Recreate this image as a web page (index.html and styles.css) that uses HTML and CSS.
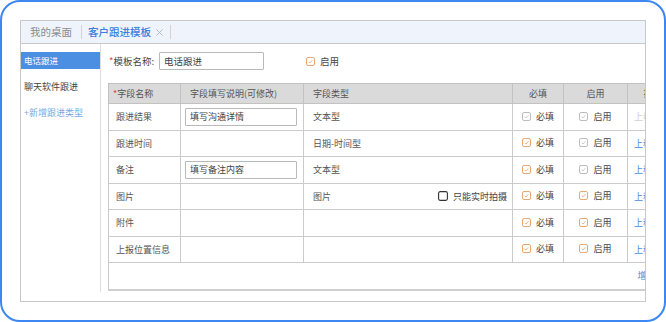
FILE: index.html
```html
<!DOCTYPE html>
<html>
<head>
<meta charset="utf-8">
<title>客户跟进模板</title>
<link rel="stylesheet" href="styles.css">
</head>
<body>
<div class="frame">
  <div class="window">
    <div class="tabbar">
      <span class="tab">我的桌面</span>
      <span class="sep"></span>
      <span class="tab active">客户跟进模板<svg class="close" width="7" height="7" viewBox="0 0 7 7"><path d="M0.5 0.5 L6.5 6.5 M6.5 0.5 L0.5 6.5" stroke="#b4b4b4" stroke-width="0.9" fill="none"/></svg></span>
      <span class="sep sep-last"></span>
    </div>
    <div class="body">
      <aside class="sidebar">
        <div class="side-item selected">电话跟进</div>
        <div class="side-item">聊天软件跟进</div>
        <div class="side-item add">+新增跟进类型</div>
      </aside>
      <main class="main">
        <div class="form-row">
          <span class="form-label"><span class="req">*</span>模板名称:</span>
          <span class="input name-input">电话跟进</span>
          <span class="check-label enable-top"><svg class="cb orange" width="9" height="9" viewBox="0 0 9 9"><rect x="0.5" y="0.5" width="8" height="8" rx="1.5" fill="#fff" stroke="currentColor"/><path d="M2.7 4.8 L4 6 L6.3 3.3" fill="none" stroke="currentColor" stroke-width="0.8"/></svg>启用</span>
        </div>
        <div class="table-wrap">
          <table class="fields">
            <colgroup>
              <col class="c1"><col class="c2"><col class="c3"><col class="c4"><col class="c5"><col class="c6">
            </colgroup>
            <thead>
              <tr>
                <th class="first"><span class="req">*</span>字段名称</th>
                <th>字段填写说明(可修改)</th>
                <th>字段类型</th>
                <th class="center">必填</th>
                <th class="center">启用</th>
                <th class="center">操作</th>
              </tr>
            </thead>
            <tbody>
              <tr>
                <td class="first">跟进结果</td>
                <td class="incell"><span class="input cell-input">填写沟通详情</span></td>
                <td>文本型</td>
                <td class="center"><span class="check-label"><svg class="cb grey" width="9" height="9" viewBox="0 0 9 9"><rect x="0.5" y="0.5" width="8" height="8" rx="1.5" fill="#fff" stroke="currentColor"/><path d="M2.7 4.8 L4 6 L6.3 3.3" fill="none" stroke="currentColor" stroke-width="0.8"/></svg>必填</span></td>
                <td class="center"><span class="check-label"><svg class="cb grey" width="9" height="9" viewBox="0 0 9 9"><rect x="0.5" y="0.5" width="8" height="8" rx="1.5" fill="#fff" stroke="currentColor"/><path d="M2.7 4.8 L4 6 L6.3 3.3" fill="none" stroke="currentColor" stroke-width="0.8"/></svg>启用</span></td>
                <td class="op disabled">上移</td>
              </tr>
              <tr>
                <td class="first">跟进时间</td>
                <td></td>
                <td>日期-时间型</td>
                <td class="center"><span class="check-label"><svg class="cb orange" width="9" height="9" viewBox="0 0 9 9"><rect x="0.5" y="0.5" width="8" height="8" rx="1.5" fill="#fff" stroke="currentColor"/><path d="M2.7 4.8 L4 6 L6.3 3.3" fill="none" stroke="currentColor" stroke-width="0.8"/></svg>必填</span></td>
                <td class="center"><span class="check-label"><svg class="cb grey" width="9" height="9" viewBox="0 0 9 9"><rect x="0.5" y="0.5" width="8" height="8" rx="1.5" fill="#fff" stroke="currentColor"/><path d="M2.7 4.8 L4 6 L6.3 3.3" fill="none" stroke="currentColor" stroke-width="0.8"/></svg>启用</span></td>
                <td class="op">上移</td>
              </tr>
              <tr>
                <td class="first">备注</td>
                <td class="incell"><span class="input cell-input">填写备注内容</span></td>
                <td>文本型</td>
                <td class="center"><span class="check-label"><svg class="cb orange" width="9" height="9" viewBox="0 0 9 9"><rect x="0.5" y="0.5" width="8" height="8" rx="1.5" fill="#fff" stroke="currentColor"/><path d="M2.7 4.8 L4 6 L6.3 3.3" fill="none" stroke="currentColor" stroke-width="0.8"/></svg>必填</span></td>
                <td class="center"><span class="check-label"><svg class="cb grey" width="9" height="9" viewBox="0 0 9 9"><rect x="0.5" y="0.5" width="8" height="8" rx="1.5" fill="#fff" stroke="currentColor"/><path d="M2.7 4.8 L4 6 L6.3 3.3" fill="none" stroke="currentColor" stroke-width="0.8"/></svg>启用</span></td>
                <td class="op">上移</td>
              </tr>
              <tr>
                <td class="first">图片</td>
                <td></td>
                <td><div class="type-split"><span>图片</span><span class="check-label"><svg class="cb dark" width="10" height="10" viewBox="0 0 10 10"><rect x="0.6" y="0.6" width="8.8" height="8.8" rx="1.6" fill="#fff" stroke="currentColor" stroke-width="1.1"/></svg>只能实时拍摄</span></div></td>
                <td class="center"><span class="check-label"><svg class="cb orange" width="9" height="9" viewBox="0 0 9 9"><rect x="0.5" y="0.5" width="8" height="8" rx="1.5" fill="#fff" stroke="currentColor"/><path d="M2.7 4.8 L4 6 L6.3 3.3" fill="none" stroke="currentColor" stroke-width="0.8"/></svg>必填</span></td>
                <td class="center"><span class="check-label"><svg class="cb orange" width="9" height="9" viewBox="0 0 9 9"><rect x="0.5" y="0.5" width="8" height="8" rx="1.5" fill="#fff" stroke="currentColor"/><path d="M2.7 4.8 L4 6 L6.3 3.3" fill="none" stroke="currentColor" stroke-width="0.8"/></svg>启用</span></td>
                <td class="op">上移</td>
              </tr>
              <tr>
                <td class="first">附件</td>
                <td></td>
                <td></td>
                <td class="center"><span class="check-label"><svg class="cb orange" width="9" height="9" viewBox="0 0 9 9"><rect x="0.5" y="0.5" width="8" height="8" rx="1.5" fill="#fff" stroke="currentColor"/><path d="M2.7 4.8 L4 6 L6.3 3.3" fill="none" stroke="currentColor" stroke-width="0.8"/></svg>必填</span></td>
                <td class="center"><span class="check-label"><svg class="cb orange" width="9" height="9" viewBox="0 0 9 9"><rect x="0.5" y="0.5" width="8" height="8" rx="1.5" fill="#fff" stroke="currentColor"/><path d="M2.7 4.8 L4 6 L6.3 3.3" fill="none" stroke="currentColor" stroke-width="0.8"/></svg>启用</span></td>
                <td class="op">上移</td>
              </tr>
              <tr>
                <td class="first">上报位置信息</td>
                <td></td>
                <td></td>
                <td class="center"><span class="check-label"><svg class="cb orange" width="9" height="9" viewBox="0 0 9 9"><rect x="0.5" y="0.5" width="8" height="8" rx="1.5" fill="#fff" stroke="currentColor"/><path d="M2.7 4.8 L4 6 L6.3 3.3" fill="none" stroke="currentColor" stroke-width="0.8"/></svg>必填</span></td>
                <td class="center"><span class="check-label"><svg class="cb orange" width="9" height="9" viewBox="0 0 9 9"><rect x="0.5" y="0.5" width="8" height="8" rx="1.5" fill="#fff" stroke="currentColor"/><path d="M2.7 4.8 L4 6 L6.3 3.3" fill="none" stroke="currentColor" stroke-width="0.8"/></svg>启用</span></td>
                <td class="op">上移</td>
              </tr>
            </tbody>
            <tfoot>
              <tr class="foot">
                <td colspan="5" class="foot-empty"></td>
                <td class="op foot-add">增加</td>
              </tr>
            </tfoot>
          </table>
        </div>
      </main>
    </div>
  </div>
</div>
</body>
</html>
```
FILE: styles.css
```css
html, body {
  margin: 0;
  padding: 0;
  background: #ffffff;
}

body {
  font-family: "Noto Sans CJK SC", "Noto Sans", sans-serif;
}

.frame {
  width: 666px;
  height: 322px;
  box-sizing: border-box;
  border: 2px solid #3d87f2;
  border-radius: 20px;
  padding: 18px 0 0 18px;
}

.window {
  width: 626px;
  height: 282px;
  box-sizing: border-box;
  border: 1px solid #c8c8c8;
  display: flex;
  flex-direction: column;
  overflow: hidden;
}

/* tab bar */
.tabbar {
  height: 23px;
  box-sizing: border-box;
  flex-shrink: 0;
  background: #eff3fb;
  border-bottom: 1px solid #c9c9c9;
  display: flex;
  align-items: center;
  padding-left: 9px;
  font-size: 10.5px;
}

.tab {
  color: #8c8c8c;
  line-height: 1;
}

.tab.active {
  color: #3b80dc;
  font-weight: 500;
  display: flex;
  align-items: center;
}

.close {
  margin-left: 5px;
}

.sep {
  width: 1px;
  height: 14px;
  background: #d3d3d3;
  margin: 0 6px 0 9px;
}

.sep-last {
  margin-left: 7px;
}

/* body */
.body {
  flex: 1;
  display: flex;
  min-height: 0;
}

.sidebar {
  width: 80px;
  flex-shrink: 0;
  box-sizing: border-box;
  border-right: 1px solid #dedede;
  padding-top: 8px;
  margin-bottom: 9px;
}

.side-item {
  height: 17px;
  line-height: 17px;
  padding-left: 3px;
  margin-bottom: 9px;
  font-size: 9px;
  color: #444;
  white-space: nowrap;
}

.side-item.selected {
  background: #4b8fe2;
  color: #ffffff;
  font-size: 8.5px;
}

.side-item.add {
  color: #7aa9e3;
}

.main {
  flex: 1;
  min-width: 0;
  overflow: hidden;
  padding: 8px 0 0 7px;
}

.form-row {
  display: flex;
  align-items: center;
  height: 18px;
  font-size: 9.5px;
  color: #444;
}

.form-label {
  width: 50px;
  margin-left: 1px;
  white-space: nowrap;
}

.req {
  color: #e0403a;
}

.input {
  box-sizing: border-box;
  height: 18px;
  border: 1px solid #b9b9b9;
  border-radius: 1px;
  padding-left: 4px;
  display: flex;
  align-items: center;
  color: #444;
  background: #fff;
  white-space: nowrap;
}

.name-input {
  width: 105px;
}

.check-label {
  display: inline-flex;
  align-items: center;
  white-space: nowrap;
  gap: 5px;
  color: #444;
}

.enable-top {
  margin-left: 42px;
}

.cb {
  display: block;
  flex-shrink: 0;
}

.cb.orange { color: #e8a874; }
.cb.grey { color: #bdbdbd; }
.cb.dark { color: #333333; }

/* table */
.table-wrap {
  margin-top: 13px;
}

.fields {
  border-collapse: collapse;
  table-layout: fixed;
  width: 569px;
  font-size: 9px;
  color: #555;
  border-bottom: 2px solid #cfcfcf;
}

.c1 { width: 72px; }
.c2 { width: 123px; }
.c3 { width: 209px; }
.c4 { width: 51px; }
.c5 { width: 64px; }
.c6 { width: 50px; }

.fields th {
  height: 20px;
  box-sizing: border-box;
  background: #dadada;
  font-weight: normal;
  text-align: left;
  padding: 0 0 0 9px;
  border: 1px solid #c2c2c2;
  white-space: nowrap;
  color: #555;
}

.fields th.first {
  padding-left: 4px;
}

.fields th.center,
.fields td.center {
  text-align: center;
  padding-left: 0;
}

.fields td {
  height: 26.5px;
  box-sizing: border-box;
  border: 1px solid #cbcbcb;
  padding: 0 0 0 9px;
  white-space: nowrap;
}

.fields td.first {
  padding-left: 7px;
}

.fields td.incell {
  padding: 0 6px 0 4px;
}

.cell-input {
  width: 100%;
}

.type-split {
  display: flex;
  justify-content: space-between;
  align-items: center;
  padding-right: 5px;
}

.fields td.op {
  padding-left: 6px;
  color: #4a8ad8;
}

.fields td.op.disabled {
  color: #cfcfcf;
}

.fields tr.foot td {
  height: 27px;
  border-left: none;
  border-right: none;
}

.fields tr.foot td.foot-empty {
  border-left: 1px solid #cbcbcb;
}

.fields td.foot-add {
  padding-left: 10px;
}
```
